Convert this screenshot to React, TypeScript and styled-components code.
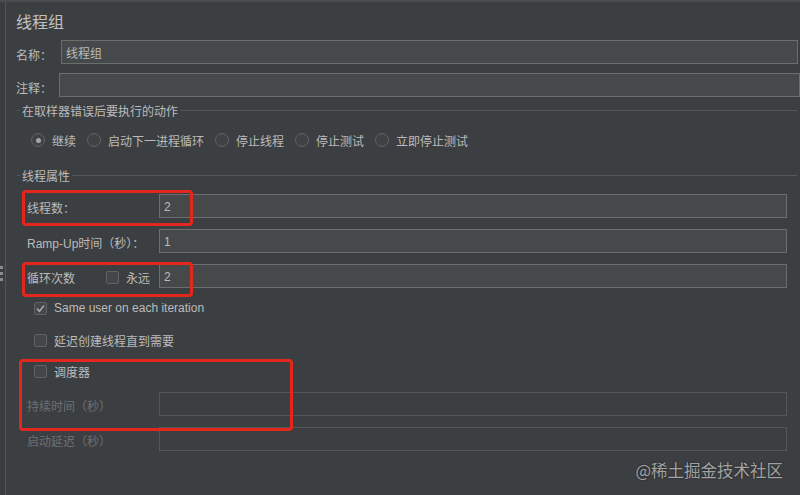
import React from "react";
import styled, { createGlobalStyle } from "styled-components";

const Global = createGlobalStyle`
  html, body { margin: 0; padding: 0; background: #3c3f41; }
  body { font-family: "Liberation Sans", "Noto Sans CJK SC", sans-serif; }
  * { box-sizing: border-box; }
`;

const Root = styled.div`
  position: relative;
  width: 800px;
  height: 495px;
  overflow: hidden;
  display: flex;
  background: #3c3f41;
  border-top: 2px solid #4a4c4e;
  color: #bbbbbb;
  font-size: 12px;
`;

const Splitter = styled.div`
  width: 6px;
  flex: none;
  border-right: 1px solid #535658;
  background: #3a3c3e;
  display: flex;
  flex-direction: column;
  gap: 3px;
  padding-top: 264px;
`;

const Grip = styled.span`
  display: block;
  width: 3px;
  height: 3px;
  background: #8a8c8e;
`;

const Main = styled.div`
  flex: 1;
  display: flex;
  flex-direction: column;
  padding-left: 10px;
`;

const Title = styled.div`
  font-size: 16px;
  line-height: 22px;
  margin-top: 10px;
  color: #c0c0c0;
`;

const TopRow = styled.div<{ $mt: number; $mr: number; $label: number }>`
  display: flex;
  align-items: center;
  height: 24px;
  margin-top: ${(p) => p.$mt}px;
  margin-right: ${(p) => p.$mr}px;
  & > label {
    width: ${(p) => p.$label}px;
    flex: none;
    padding-top: 4px;
  }
`;

const Input = styled.div<{ $disabled?: boolean }>`
  flex: 1;
  height: 24px;
  display: flex;
  align-items: center;
  padding-left: 4px;
  padding-top: 1px;
  background: ${(p) => (p.$disabled ? "transparent" : "#45494a")};
  border: 1px solid ${(p) => (p.$disabled ? "#545658" : "#6b6d6e")};
  color: #bbbbbb;
  font-size: 12px;
`;

const Fieldset = styled.div<{ $mt: number; $pl: number }>`
  display: flex;
  flex-direction: column;
  margin: ${(p) => p.$mt}px 3px 0 1px;
  padding-left: ${(p) => p.$pl}px;
`;

const Legend = styled.div<{ $pl: number }>`
  display: flex;
  align-items: center;
  height: 18px;
  margin-left: -${(p) => p.$pl}px;
  &::before {
    content: "";
    width: 3px;
    height: 1px;
    background: #56595b;
  }
  &::after {
    content: "";
    flex: 1;
    height: 1px;
    background: #56595b;
  }
  & > span {
    padding: 1px 2px 0;
  }
`;

const RadioRow = styled.div`
  display: flex;
  align-items: center;
  height: 20px;
  margin-top: 11px;
  gap: 11px;
`;

const RadioItem = styled.label`
  display: flex;
  align-items: center;
  gap: 7px;
`;

const RadioCircle = styled.span<{ $on?: boolean }>`
  width: 14px;
  height: 14px;
  border-radius: 50%;
  border: 1px solid #606263;
  background: #3f4243;
  display: flex;
  align-items: center;
  justify-content: center;
  &::after {
    content: "";
    width: 5px;
    height: 5px;
    border-radius: 50%;
    background: ${(p) => (p.$on ? "#a6a6a6" : "transparent")};
  }
`;

const PropsBody = styled.div`
  display: flex;
  flex-direction: column;
  padding-right: 10px;
`;

const FieldRow = styled.div<{ $mt: number }>`
  display: flex;
  align-items: center;
  height: 24px;
  margin-top: ${(p) => p.$mt}px;
`;

const LabelCell = styled.div<{ $disabled?: boolean }>`
  width: 132px;
  flex: none;
  display: flex;
  align-items: center;
  padding-right: 9px;
  padding-top: 2px;
  color: ${(p) => (p.$disabled ? "#6e7072" : "#bbbbbb")};
`;

const InlineCheck = styled.label`
  margin-left: auto;
  display: flex;
  align-items: center;
  gap: 7px;
`;

const CheckRow = styled.label<{ $mt: number }>`
  display: flex;
  align-items: center;
  height: 20px;
  gap: 7px;
  padding-left: 7px;
  margin-top: ${(p) => p.$mt}px;
`;

const Box = styled.span`
  width: 13px;
  height: 13px;
  flex: none;
  border: 1px solid #606263;
  border-radius: 2px;
  background: #43474a;
  display: flex;
  align-items: center;
  justify-content: center;
`;

const Mark = styled.div<{ $x: number; $y: number; $w: number; $h: number }>`
  position: absolute;
  left: ${(p) => p.$x}px;
  top: ${(p) => p.$y}px;
  width: ${(p) => p.$w}px;
  height: ${(p) => p.$h}px;
  border: 3px solid #e3271d;
  border-radius: 4px;
  pointer-events: none;
`;

const Watermark = styled.div`
  position: absolute;
  right: 17px;
  top: 457px;
  font-family: "Noto Sans CJK SC", sans-serif;
  font-size: 16.5px;
  line-height: 22px;
  color: #a2a2a2;
  text-shadow: 0 0 2px #1e1e1e;
`;

const Check = () => (
  <svg width="11" height="11" viewBox="0 0 11 11">
    <path d="M2 5.6 L4.5 8.2 L9 2.6" fill="none" stroke="#a9a9a9" strokeWidth="1.6" />
  </svg>
);

const radios = [
  { t: "继续", on: true },
  { t: "启动下一进程循环" },
  { t: "停止线程" },
  { t: "停止测试" },
  { t: "立即停止测试" },
];

export default function App() {
  return (
    <>
      <Global />
      <Root>
        <Splitter>
          <Grip />
          <Grip />
          <Grip />
        </Splitter>
        <Main>
          <Title>线程组</Title>
          <TopRow $mt={6} $mr={2} $label={45}>
            <label>名称：</label>
            <Input>线程组</Input>
          </TopRow>
          <TopRow $mt={9} $mr={0} $label={43}>
            <label>注释：</label>
            <Input />
          </TopRow>

          <Fieldset $mt={4} $pl={14}>
            <Legend $pl={14}>
              <span>在取样器错误后要执行的动作</span>
            </Legend>
            <RadioRow>
              {radios.map((r) => (
                <RadioItem key={r.t}>
                  <RadioCircle $on={r.on} />
                  {r.t}
                </RadioItem>
              ))}
            </RadioRow>
          </Fieldset>

          <Fieldset $mt={16} $pl={10}>
            <Legend $pl={10}>
              <span>线程属性</span>
            </Legend>
            <PropsBody>
              <FieldRow $mt={10}>
                <LabelCell>线程数：</LabelCell>
                <Input>2</Input>
              </FieldRow>
              <FieldRow $mt={11}>
                <LabelCell>Ramp-Up时间（秒）：</LabelCell>
                <Input>1</Input>
              </FieldRow>
              <FieldRow $mt={11}>
                <LabelCell>
                  循环次数
                  <InlineCheck>
                    <Box />
                    永远
                  </InlineCheck>
                </LabelCell>
                <Input>2</Input>
              </FieldRow>
              <CheckRow $mt={10}>
                <Box>
                  <Check />
                </Box>
                Same user on each iteration
              </CheckRow>
              <CheckRow $mt={12}>
                <Box />
                延迟创建线程直到需要
              </CheckRow>
              <CheckRow $mt={11}>
                <Box />
                调度器
              </CheckRow>
              <FieldRow $mt={11}>
                <LabelCell $disabled>持续时间（秒）</LabelCell>
                <Input $disabled />
              </FieldRow>
              <FieldRow $mt={11}>
                <LabelCell $disabled>启动延迟（秒）</LabelCell>
                <Input $disabled />
              </FieldRow>
            </PropsBody>
          </Fieldset>
        </Main>

        <Mark $x={22} $y={188} $w={171} $h={36} />
        <Mark $x={22} $y={260} $w={171} $h={35} />
        <Mark $x={19} $y={357} $w={274} $h={72} />
        <Watermark>@稀土掘金技术社区</Watermark>
      </Root>
    </>
  );
}
